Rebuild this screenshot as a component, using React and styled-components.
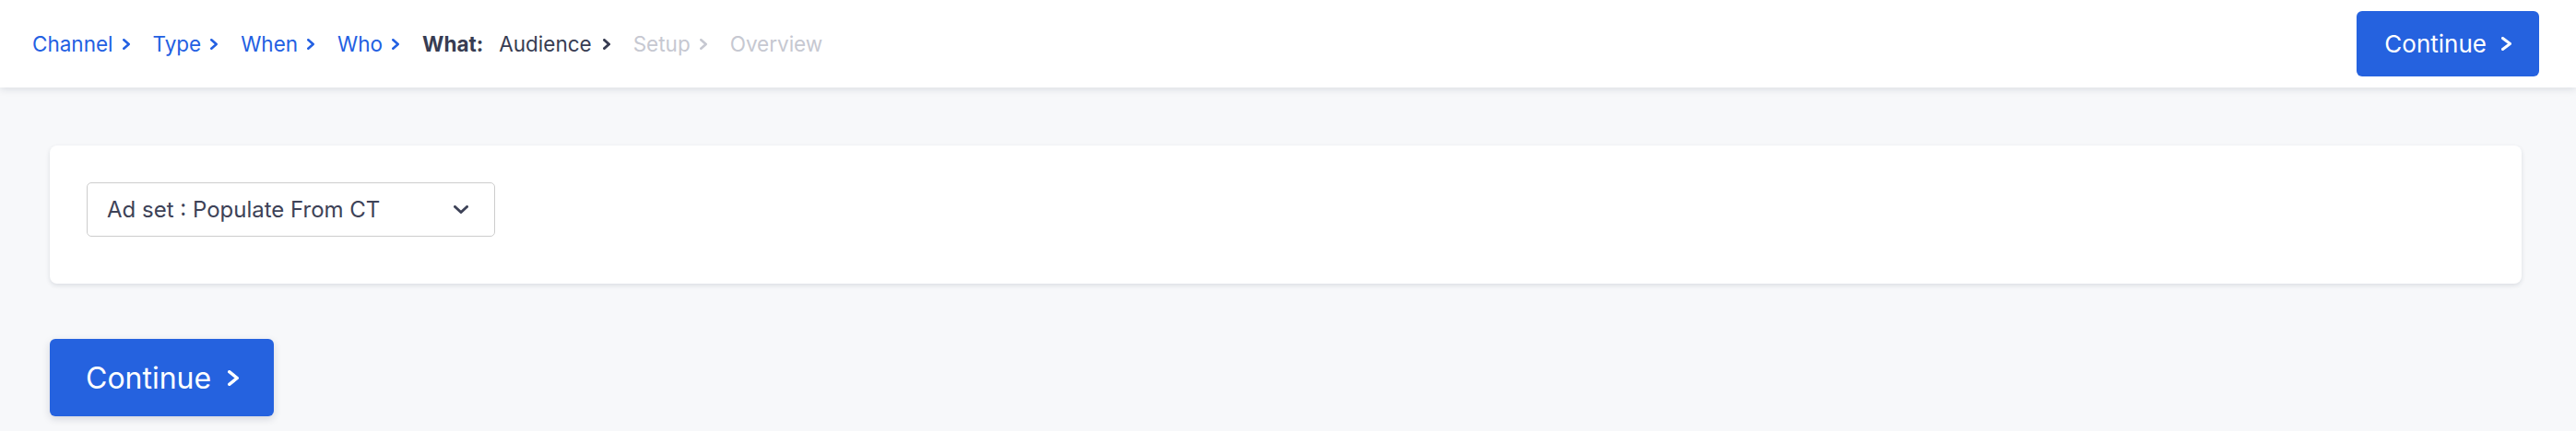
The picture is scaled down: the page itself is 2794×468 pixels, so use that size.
import React from "react";
import styled, { createGlobalStyle } from "styled-components";

const GlobalStyle = createGlobalStyle`
  html, body {
    margin: 0;
    padding: 0;
    background: #f7f8fa;
    font-family: "Inter", "Liberation Sans", sans-serif;
  }
`;

const Page = styled.div`
  min-height: 468px;
  background: #f7f8fa;
`;

const Header = styled.header`
  height: 95px;
  background: #ffffff;
  box-shadow: 0 2px 8px rgba(20, 30, 60, 0.12);
  display: flex;
  align-items: center;
  justify-content: space-between;
  padding: 0 40px 0 35px;
  position: relative;
  z-index: 1;
`;

const Crumbs = styled.nav`
  display: flex;
  align-items: center;
  gap: 25px;
`;

const Crumb = styled.span`
  display: flex;
  align-items: center;
  gap: ${(p) => (p.state === "current" ? "12px" : "10px")};
  font-size: 22.5px;
  color: ${(p) =>
    p.state === "done" ? "#2360e2" : p.state === "current" ? "#373c52" : "#c6c8d1"};
`;

const CrumbLabel = styled.strong`
  font-weight: 700;
  margin-right: 17px;
`;

const Main = styled.main`
  padding: 63px 59px 0 54px;
`;

const Card = styled.section`
  background: #ffffff;
  border-radius: 8px;
  padding: 40px 40px 51px;
  box-shadow: 0 2px 5px rgba(20, 30, 60, 0.12);
`;

const Select = styled.div`
  width: 443px;
  height: 59px;
  box-sizing: border-box;
  border: 1.5px solid #cdcdcd;
  border-radius: 5px;
  display: flex;
  align-items: center;
  justify-content: space-between;
  padding: 0 28px 0 21px;
  font-size: 24px;
  color: #3d4257;
`;

const Button = styled.button`
  display: flex;
  align-items: center;
  gap: ${(p) => (p.big ? "18px" : "16px")};
  border: none;
  border-radius: 6px;
  background: #2562df;
  color: #ffffff;
  font-family: "Inter", "Liberation Sans", sans-serif;
  font-size: ${(p) => (p.big ? "32px" : "26px")};
  height: ${(p) => (p.big ? "84px" : "71px")};
  padding: ${(p) => (p.big ? "0 38px 0 39px" : "0 30px")};
  box-shadow: ${(p) => (p.big ? "0 3px 8px rgba(20, 30, 60, 0.15)" : "none")};
  cursor: pointer;
`;

const BottomBar = styled.div`
  padding-top: 60px;
`;

const Chevron = ({ w = 8, h = 12, stroke = 2.6, color = "currentColor" }) => (
  <svg width={w} height={h} viewBox={`0 0 ${w} ${h}`} fill="none">
    <polyline
      points={`${stroke / 2},${stroke / 2} ${w - stroke / 2},${h / 2} ${stroke / 2},${h - stroke / 2}`}
      stroke={color}
      strokeWidth={stroke}
      strokeLinecap="round"
      strokeLinejoin="round"
    />
  </svg>
);

const ChevronDown = () => (
  <svg width="16" height="9" viewBox="0 0 16 9" fill="none">
    <polyline
      points="1.5,1.5 8,7.5 14.5,1.5"
      stroke="#3d4257"
      strokeWidth="3"
      strokeLinecap="round"
      strokeLinejoin="round"
    />
  </svg>
);

const steps = [
  { name: "Channel", state: "done" },
  { name: "Type", state: "done" },
  { name: "When", state: "done" },
  { name: "Who", state: "done" },
  { name: "Audience", label: "What:", state: "current" },
  { name: "Setup", state: "todo" },
  { name: "Overview", state: "todo", last: true },
];

export default function App() {
  return (
    <Page>
      <GlobalStyle />
      <Header>
        <Crumbs>
          {steps.map((s) => (
            <Crumb key={s.name} state={s.state}>
              <span>
                {s.label && <CrumbLabel>{s.label}</CrumbLabel>}
                {s.name}
              </span>
              {!s.last && <Chevron stroke={s.state === "current" ? 3 : 2.6} />}
            </Crumb>
          ))}
        </Crumbs>
        <Button>
          Continue
          <Chevron w={11} h={15} stroke={3} />
        </Button>
      </Header>
      <Main>
        <Card>
          <Select>
            <span>Ad set : Populate From CT</span>
            <ChevronDown />
          </Select>
        </Card>
        <BottomBar>
          <Button big>
            Continue
            <Chevron w={12} h={17} stroke={3.4} />
          </Button>
        </BottomBar>
      </Main>
    </Page>
  );
}
